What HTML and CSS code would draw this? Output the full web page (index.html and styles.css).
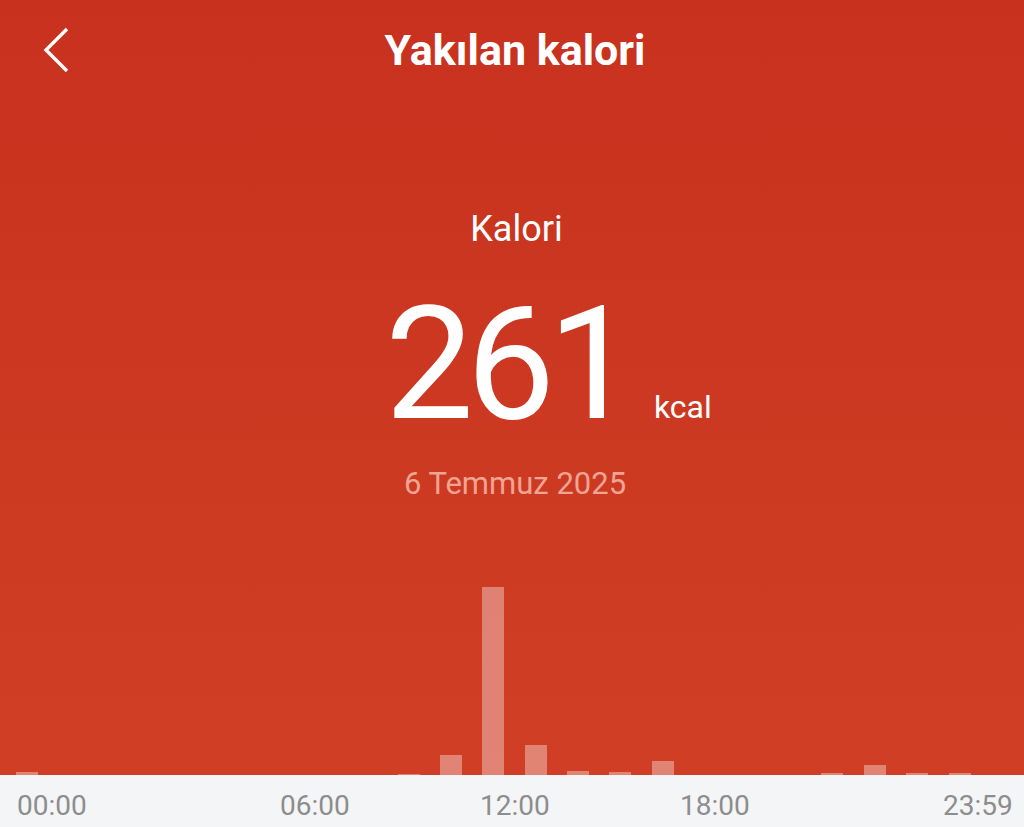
FILE: index.html
```html
<!DOCTYPE html>
<html lang="tr">
<head>
<meta charset="utf-8">
<title>Yakılan kalori</title>
<link rel="stylesheet" href="styles.css">
</head>
<body>
<div class="screen">
  <header class="topbar">
    <div class="back">
      <svg width="30" height="48" viewBox="0 0 30 48" aria-hidden="true">
        <polyline points="25,2 4,23 25,44" fill="none" stroke="#fff" stroke-width="3.4" stroke-linejoin="miter" stroke-linecap="butt"/>
      </svg>
    </div>
    <h1 class="title">Yakılan kalori</h1>
    <div></div>
  </header>

  <section class="summary">
    <div class="label">Kalori</div>
    <div class="value-row">
      <span></span>
      <span class="value">261</span>
      <span class="unit">kcal</span>
    </div>
    <div class="date">6 Temmuz 2025</div>
  </section>

  <section class="chart">
    <div class="bars">
      <div class="bar" style="height:3px"></div>
      <div class="bar" style="height:0"></div>
      <div class="bar" style="height:0"></div>
      <div class="bar" style="height:0"></div>
      <div class="bar" style="height:0"></div>
      <div class="bar" style="height:0"></div>
      <div class="bar" style="height:0"></div>
      <div class="bar" style="height:0"></div>
      <div class="bar" style="height:0"></div>
      <div class="bar" style="height:1px"></div>
      <div class="bar" style="height:20px"></div>
      <div class="bar" style="height:188px"></div>
      <div class="bar" style="height:30px"></div>
      <div class="bar" style="height:4px"></div>
      <div class="bar" style="height:3px"></div>
      <div class="bar" style="height:14px"></div>
      <div class="bar" style="height:0"></div>
      <div class="bar" style="height:0"></div>
      <div class="bar" style="height:0"></div>
      <div class="bar" style="height:2px"></div>
      <div class="bar" style="height:10px"></div>
      <div class="bar" style="height:2px"></div>
      <div class="bar" style="height:2px"></div>
      <div class="bar" style="height:0"></div>
    </div>
  </section>

  <footer class="axis">
    <span>00:00</span>
    <span>06:00</span>
    <span>12:00</span>
    <span>18:00</span>
    <span>23:59</span>
  </footer>
</div>
</body>
</html>
```

FILE: styles.css
```css
* { box-sizing: border-box; }

html, body {
  margin: 0;
  padding: 0;
}

body {
  font-family: Roboto, "Noto Sans", "Liberation Sans", sans-serif;
  background: #f4f5f7;
}

.screen {
  width: 1024px;
  height: 827px;
  display: flex;
  flex-direction: column;
  overflow: hidden;
}

.topbar {
  height: 100px;
  display: grid;
  grid-template-columns: 1fr auto 1fr;
  align-items: center;
  background: linear-gradient(#c8311e, #c9331f);
}

.back {
  padding-left: 42px;
  padding-top: 2px;
  display: flex;
  align-items: center;
}

.back svg { display: block; }

.title {
  margin: 0;
  padding-top: 1px;
  padding-left: 6px;
  color: #fff;
  font-size: 43px;
  font-weight: 700;
  line-height: 1;
  letter-spacing: 0;
}

.summary {
  display: flex;
  flex-direction: column;
  align-items: center;
  padding-top: 108px;
  background: linear-gradient(#c9331f, #cd3a22);
}

.label {
  color: #fff;
  font-size: 36px;
  line-height: 42px;
  padding-left: 9px;
}

.value-row {
  width: 100%;
  display: grid;
  grid-template-columns: 1fr auto 1fr;
  align-items: baseline;
  margin-top: 35px;
}

.value {
  color: #fff;
  font-size: 158px;
  line-height: 1;
  font-weight: 400;
  letter-spacing: -7.5px;
  padding-right: 10px;
}

.unit {
  color: #fff;
  font-size: 32px;
  padding-left: 15px;
}

.date {
  margin-top: 25px;
  padding-left: 6px;
  color: #f0a493;
  font-size: 31px;
  line-height: 1;
}

.chart {
  flex: 1;
  display: flex;
  align-items: flex-end;
  background: linear-gradient(#cd3a22, #d03f25);
  padding-left: 16px;
}

.bars {
  display: grid;
  grid-template-columns: repeat(24, 22px);
  column-gap: 20.4px;
  align-items: end;
  height: 200px;
}

.bar {
  background: rgba(255, 255, 255, 0.36);
}

.axis {
  height: 52px;
  flex-shrink: 0;
  background: #f4f5f7;
  display: grid;
  grid-template-columns: 263px 200px 200px 263px auto;
  align-items: center;
  padding: 8px 0 0 17px;
  color: #8d8d8d;
  font-size: 28px;
}
```
